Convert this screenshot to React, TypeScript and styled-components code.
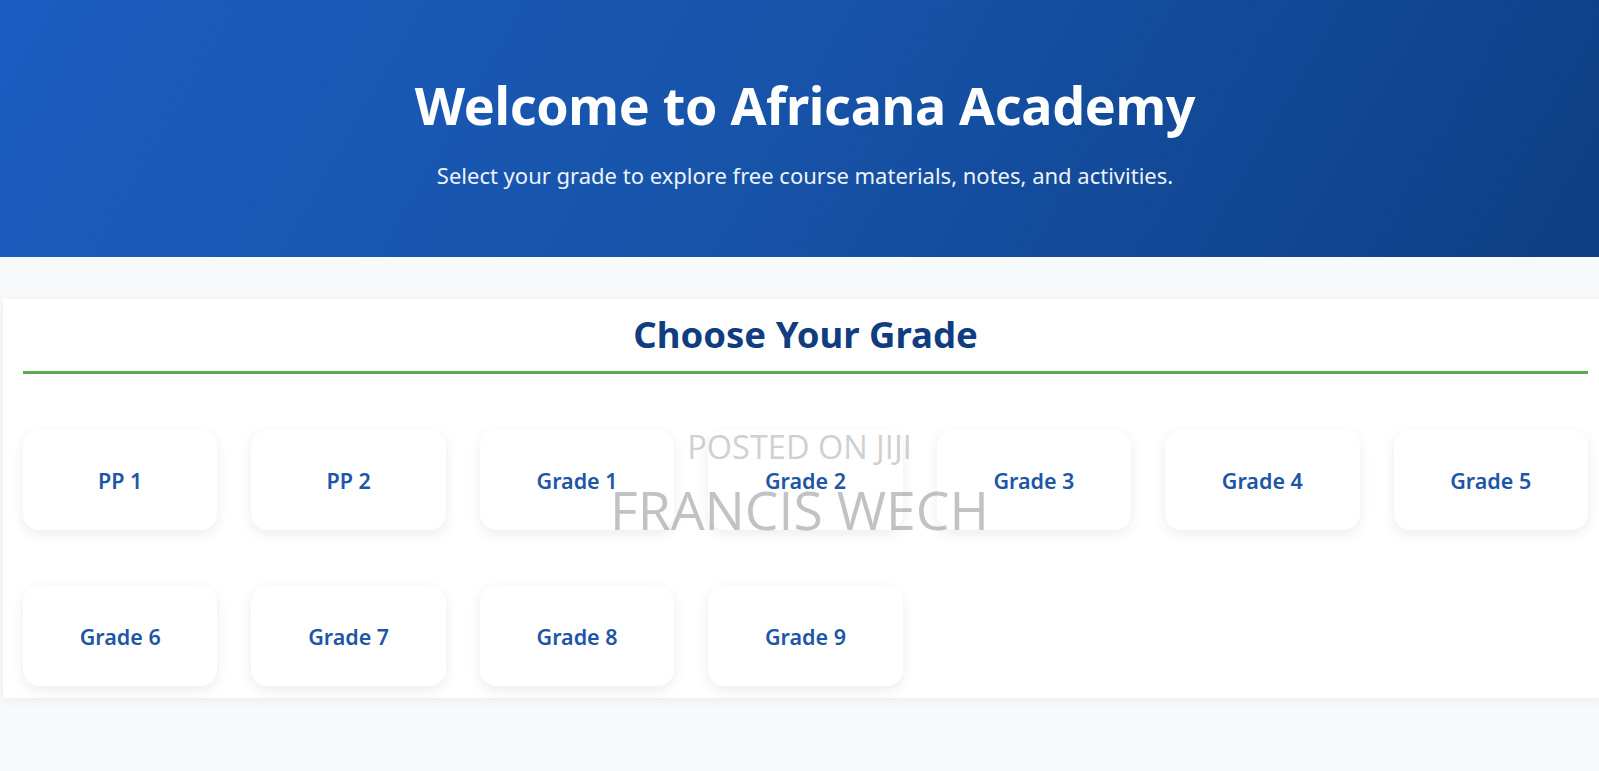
import React from 'react';
import styled, { createGlobalStyle } from 'styled-components';

const GlobalStyle = createGlobalStyle`
  html, body {
    margin: 0;
    padding: 0;
    overflow-x: hidden;
    background: #f8f9fb;
  }
  body {
    font-family: "Noto Sans", "Open Sans", sans-serif;
  }
`;

const grades = [
  'PP 1',
  'PP 2',
  'Grade 1',
  'Grade 2',
  'Grade 3',
  'Grade 4',
  'Grade 5',
  'Grade 6',
  'Grade 7',
  'Grade 8',
  'Grade 9',
];

const Page = styled.div`
  position: relative;
  width: 1610px;
  min-height: 771px;
  background: #f8f9fb;
`;

const Hero = styled.header`
  height: 257px;
  box-sizing: border-box;
  padding-top: 72px;
  text-align: center;
  color: #ffffff;
  background: linear-gradient(120deg, #1a5cc0 0%, #1754aa 45%, #0e3e84 100%);
`;

const HeroTitle = styled.h1`
  margin: 0;
  font-size: 52px;
  font-weight: 700;
  line-height: 66px;
  letter-spacing: -0.3px;
`;

const HeroText = styled.p`
  margin: 22px 0 0;
  font-size: 22px;
  line-height: 30px;
  color: #eef3fb;
`;

const GradeCard = styled.section`
  margin: 42px 0 0 3px;
  width: 1605px;
  box-sizing: border-box;
  padding: 10px 20px 12px;
  background: #ffffff;
  box-shadow: 0 2px 10px rgba(0, 0, 0, 0.06);
`;

const SectionTitle = styled.h2`
  margin: 0;
  padding-bottom: 12px;
  text-align: center;
  font-size: 36.5px;
  line-height: 50px;
  font-weight: 700;
  color: #0f3d80;
  border-bottom: 3px solid #5aab52;
`;

const GradeGrid = styled.div`
  display: grid;
  grid-template-columns: repeat(7, 1fr);
  column-gap: 34px;
  row-gap: 56px;
  margin-top: 56px;
`;

const GradeButton = styled.button`
  height: 100px;
  border: none;
  border-radius: 16px;
  background: #ffffff;
  box-shadow: 0 4px 14px rgba(0, 0, 0, 0.08);
  font-family: inherit;
  font-size: 21.5px;
  font-weight: 600;
  color: #1d56a6;
  cursor: pointer;
`;

const Watermark = styled.div`
  position: absolute;
  left: 0;
  width: 1599px;
  top: 427px;
  text-align: center;
  font-family: "Open Sans", "Noto Sans", sans-serif;
  pointer-events: none;
`;

const MarkSmall = styled.div`
  font-size: 32.5px;
  line-height: 40px;
  color: rgba(165, 167, 170, 0.55);
`;

const MarkBig = styled.div`
  margin-top: 11px;
  font-size: 53.5px;
  line-height: 64px;
  color: rgba(150, 153, 156, 0.6);
`;

export default function App() {
  return (
    <>
      <GlobalStyle />
      <Page>
        <Hero>
          <HeroTitle>Welcome to Africana Academy</HeroTitle>
          <HeroText>Select your grade to explore free course materials, notes, and activities.</HeroText>
        </Hero>
        <GradeCard>
          <SectionTitle>Choose Your Grade</SectionTitle>
          <GradeGrid>
            {grades.map((g) => (
              <GradeButton key={g}>{g}</GradeButton>
            ))}
          </GradeGrid>
        </GradeCard>
        <Watermark>
          <MarkSmall>POSTED ON JIJI</MarkSmall>
          <MarkBig>FRANCIS WECH</MarkBig>
        </Watermark>
      </Page>
    </>
  );
}
